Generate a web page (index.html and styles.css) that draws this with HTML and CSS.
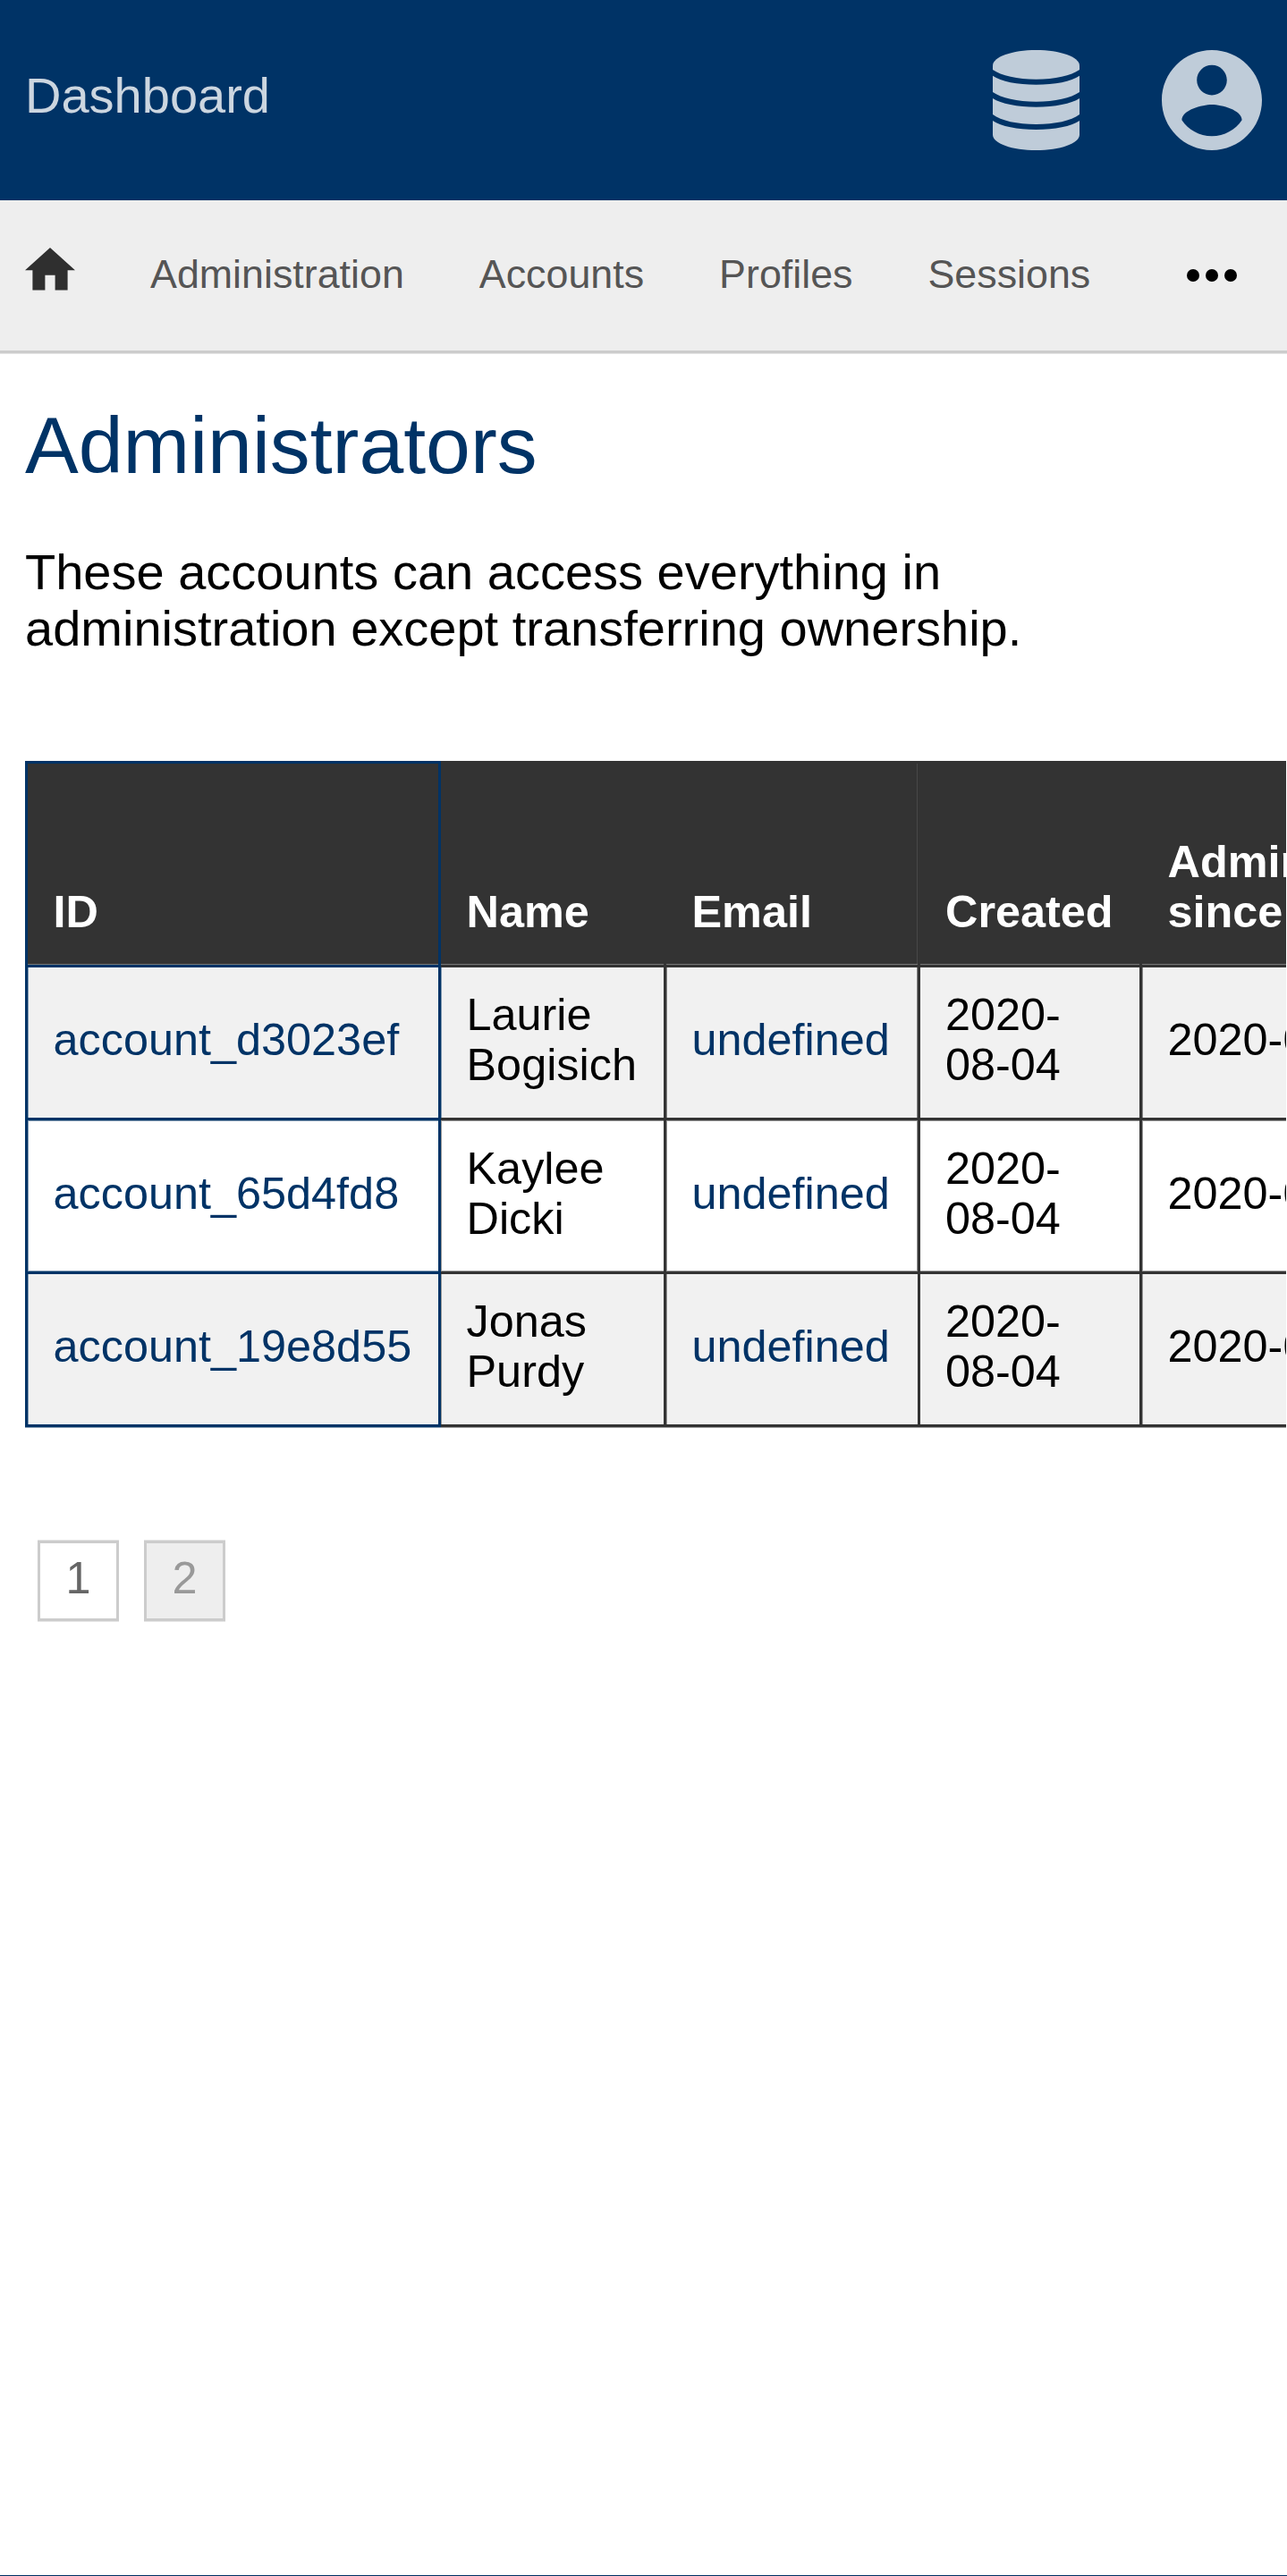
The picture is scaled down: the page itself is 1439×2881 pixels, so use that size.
FILE: index.html
```html
<!DOCTYPE html>
<html lang="en">
<head>
<meta charset="utf-8">
<title>Administrators</title>
<link rel="stylesheet" href="styles.css">
</head>
<body>
<header class="header">
  <a class="brand">Dashboard</a>
  <div class="menus">
    <svg class="icon-database" viewBox="0 0 290 336" preserveAspectRatio="none">
      <path d="M0 66V52C0 23 65 0 145 0S290 23 290 52V66C262 86 208 98 145 98S28 86 0 66Z"/>
      <path d="M0 86C28 105 82 116 145 116S262 105 290 86V141C262 161 208 173 145 173S28 161 0 141Z"/>
      <path d="M0 162C28 180 82 191 145 191S262 180 290 162V216C262 237 208 249 145 249S28 237 0 216Z"/>
      <path d="M0 237C28 256 82 267 145 267S262 256 290 237V284C290 313 225 336 145 336S0 313 0 284Z"/>
    </svg>
    <svg class="icon-account" viewBox="2 2 20 20">
      <path d="M12 2C6.48 2 2 6.48 2 12s4.48 10 10 10 10-4.48 10-10S17.52 2 12 2zm0 3c1.66 0 3 1.34 3 3s-1.34 3-3 3-3-1.34-3-3 1.34-3 3-3zm0 14.2c-2.5 0-4.71-1.28-6-3.22.03-1.99 4-3.08 6-3.08 1.99 0 5.97 1.09 6 3.08-1.29 1.94-3.5 3.22-6 3.22z"/>
    </svg>
  </div>
</header>
<nav class="nav">
  <svg class="icon-home" viewBox="2 3 20 17"><path d="M10 20v-6h4v6h5v-8h3L12 3 2 12h3v8z"/></svg>
  <a>Administration</a>
  <a>Accounts</a>
  <a>Profiles</a>
  <a>Sessions</a>
  <svg class="icon-more" viewBox="0 0 56 14"><circle cx="7" cy="7" r="7"/><circle cx="28" cy="7" r="7"/><circle cx="49" cy="7" r="7"/></svg>
</nav>
<main class="content">
  <h1>Administrators</h1>
  <p>These accounts can access everything in administration except transferring ownership.</p>
  <div class="table-wrap">
    <table class="table">
      <colgroup><col class="c-id"><col class="c-name"><col class="c-email"><col class="c-created"><col class="c-since"></colgroup>
      <thead>
        <tr><th>ID</th><th>Name</th><th>Email</th><th>Created</th><th>Administrator since</th></tr>
      </thead>
      <tbody>
        <tr><td><a>account_d3023ef</a></td><td>Laurie Bogisich</td><td><a>undefined</a></td><td>2020-08-04</td><td>2020-08-04</td></tr>
        <tr><td><a>account_65d4fd8</a></td><td>Kaylee Dicki</td><td><a>undefined</a></td><td>2020-08-04</td><td>2020-08-04</td></tr>
        <tr><td><a>account_19e8d55</a></td><td>Jonas Purdy</td><td><a>undefined</a></td><td>2020-08-04</td><td>2020-08-04</td></tr>
      </tbody>
    </table>
  </div>
  <div class="pages">
    <a class="page">1</a>
    <a class="page current">2</a>
  </div>
</main>
</body>
</html>
```
FILE: styles.css
```css
* { box-sizing: border-box; }

body {
  margin: 0;
  height: 2881px;
  overflow: hidden;
  display: flex;
  flex-direction: column;
  background: #fff;
  border-bottom: 1px solid #036;
  font: 56px/63px "Liberation Sans", Arial, sans-serif;
  color: #000;
}

.header {
  height: 224px;
  flex: none;
  padding: 0 28px;
  display: flex;
  justify-content: space-between;
  align-items: center;
  background: #036;
}
.brand { color: #ccd6e0; padding-bottom: 12px; }
.menus { display: flex; align-items: center; gap: 92px; fill: #bfccd9; }
.icon-database { width: 97px; height: 112px; }
.icon-account { width: 112px; height: 112px; }

.nav {
  height: 171px;
  flex: none;
  padding: 0 56.5px 0 28px;
  display: flex;
  align-items: center;
  gap: 84px;
  background: #eee;
  border-bottom: 3px solid #ccc;
  box-shadow: 0 1px #e5e5e5;
  font-size: 44.8px;
  line-height: 52px;
  color: #555;
}
.nav a { padding-bottom: 4px; }
.icon-home { width: 56px; height: 47.6px; margin-bottom: 14px; fill: #2f2f2f; }
.icon-more { width: 56px; height: 14px; margin-left: auto; fill: #000; }

.content { padding: 54px 0 0 28px; }
h1 {
  margin: 0;
  font-size: 89.6px;
  line-height: 98px;
  font-weight: 400;
  color: #036;
}
p { margin: 61px 0 0; width: 1250px; }

.table-wrap { margin-top: 117px; padding-bottom: 1px; width: 1410px; overflow: hidden; }
.table {
  table-layout: fixed;
  width: 1645px;
  border-collapse: separate;
  border-spacing: 0;
  font-size: 50.4px;
  line-height: 56px;
}
.c-id { width: 465px; }
.c-name { width: 252px; }
.c-email { width: 284px; }
.c-created { width: 248px; }
.c-since { width: 396px; }

th, td {
  padding: 25px 26px 31px 28.5px;
  border: 0 solid #333;
  border-width: 0 3px 3px 0;
  text-align: left;
}
th {
  height: 231px;
  vertical-align: bottom;
  font-weight: 700;
  background: #333;
  color: #fff;
  border-top-width: 3px;
  box-shadow: inset 0 -1px #777;
}
td { height: 171px; vertical-align: middle; }
tr:nth-child(2) td { height: 172px; }
tbody tr:nth-child(odd) td { background: #f1f1f1; }
th:first-child, td:first-child { border-color: #036; border-left-width: 3px; padding-right: 0; }
th:nth-child(4), td:nth-child(4) { padding-left: 28px; }
td a { color: #036; }

/* soft edges of the cell rules */
td:first-child { box-shadow: inset 1px 0 #8098b0; }
td:nth-child(2) { box-shadow: inset 1px 0 #8098b0; }
td:nth-child(3) { box-shadow: inset 1px 0 #888, inset -1px 0 #888; }
td:nth-child(5) { box-shadow: inset 1px 0 #888; }
th:nth-child(3) { box-shadow: inset 0 -1px #777, inset -1px 0 #484848; }
tr:nth-child(2) td { box-shadow: inset 0 1px #999, inset 0 -1px #999, inset 1px 0 #999; }
tbody tr:nth-child(2) td:first-child { box-shadow: inset 0 1px #8098b0, inset 0 -1px #8098b0, inset 1px 0 #8098b0; }
tbody tr:nth-child(2) td:nth-child(3) { box-shadow: inset 0 1px #999, inset 0 -1px #999, inset 1px 0 #999, inset -1px 0 #999; }
tbody tr:nth-child(2) td:nth-child(4) { box-shadow: inset 0 1px #999, inset 0 -1px #999; }
tbody tr:last-child td { box-shadow: inset 1px 0 #999, 0 1px #999; }
tbody tr:last-child td:first-child { box-shadow: inset 1px 0 #8098b0, 0 1px #8098b0; }
tbody tr:last-child td:nth-child(4) { box-shadow: 0 1px #999; }

.pages { display: flex; gap: 28px; padding: 126px 0 0 14px; font-size: 50.4px; }
.page {
  width: 91px;
  height: 90px;
  border: 3px solid #ccc;
  box-shadow: 0 -1px #e5e5e5, 0 1px #e5e5e5;
  color: #666;
  text-align: center;
  line-height: 78px;
}
.current { background: #eee; color: #999; }
```
